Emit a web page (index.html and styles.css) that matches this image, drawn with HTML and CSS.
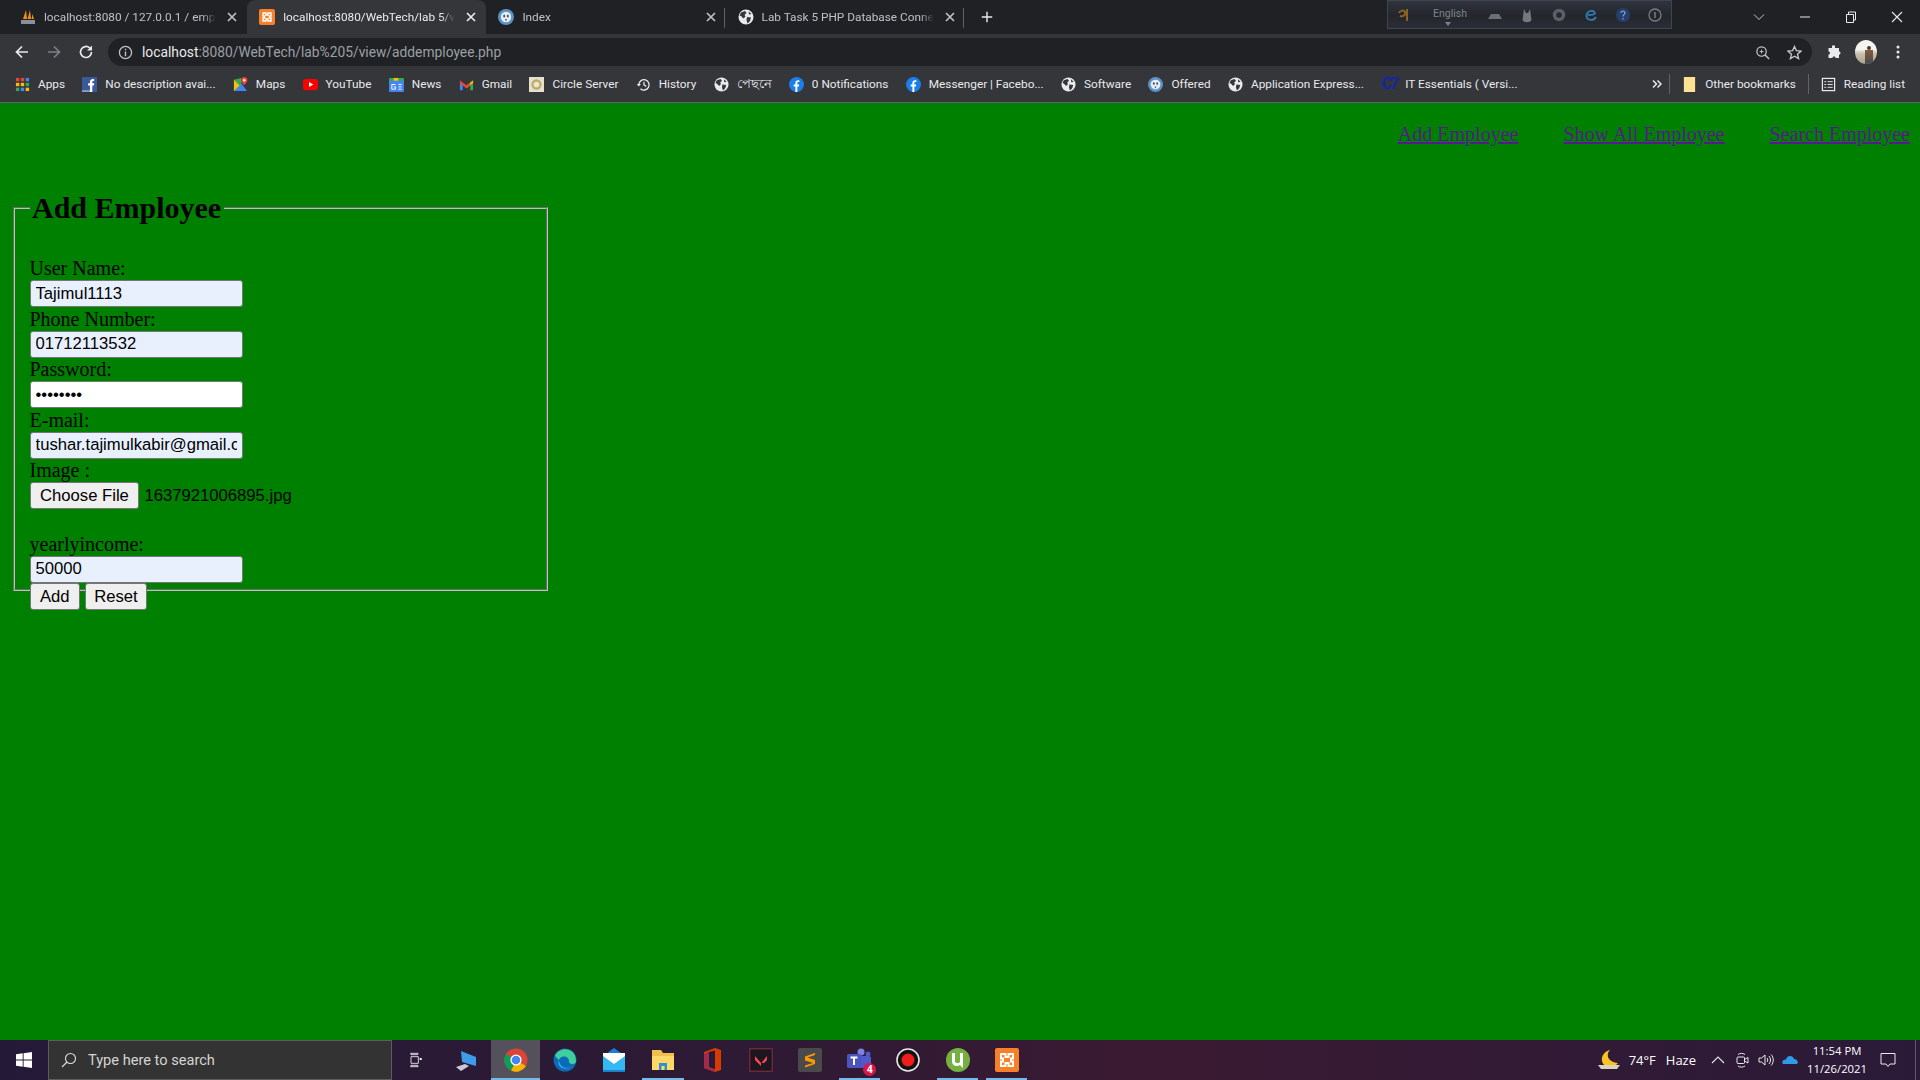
FILE: index.html
```html
<!DOCTYPE html>
<html lang="en">
<head>
    <meta charset="UTF-8">
    <title>Add Employee</title>
    <link rel="stylesheet" href="styles.css">
</head>
<body>
    <svg class="icon-defs" width="0" height="0">
        <symbol id="globe" viewBox="0 0 16 16">
            <circle cx="8" cy="8" r="7.5" fill="#e8eaed"/>
            <path d="M3 3.5 L7 2 L8.5 4 L6.5 6 L7.5 7.5 L5.5 9.5 L3 7 L1.5 6.5 Z M9 8 L13 8.5 L12 12 L9.5 14.5 L8.5 11 Z M10.5 2.5 L13.5 5 L11 5.5 Z" fill="#35363a"/>
        </symbol>
        <symbol id="fbround" viewBox="0 0 16 16">
            <circle cx="8" cy="8" r="8" fill="#1a7fe8"/>
            <path d="M6.8 16 V10 H5 V8 H6.8 V6.3 C6.8 4.4 8 3.4 9.6 3.4 L11 3.5 V5.3 H10 C9.2 5.3 8.9 5.7 8.9 6.4 V8 H10.9 L10.6 10 H8.9 V16 Z" fill="#fff"/>
        </symbol>
        <symbol id="shield" viewBox="0 0 16 16">
            <circle cx="8" cy="8" r="8" fill="#5b93c4"/>
            <circle cx="8" cy="8" r="5.2" fill="#e8eef4"/>
            <ellipse cx="6.2" cy="7" rx="1" ry="1.5" fill="#33577a"/>
            <ellipse cx="9.8" cy="7" rx="1" ry="1.5" fill="#33577a"/>
            <path d="M7 10 H9 L8 12.5 Z" fill="#33577a"/>
        </symbol>
        <symbol id="xampp" viewBox="0 0 16 16">
            <rect width="16" height="16" rx="2" fill="#f6812a"/>
            <path d="M4 4 H7 V6 H9 V4 H12 V7 H10.5 V9 H12 V12 H9 V10 H7 V12 H4 V9 H5.5 V7 H4 Z" fill="none" stroke="#fff" stroke-width="1.4"/>
        </symbol>
        <symbol id="close" viewBox="0 0 16 16">
            <path d="M4 4 L12 12 M12 4 L4 12" stroke="currentColor" stroke-width="1.7" fill="none"/>
        </symbol>
    </svg>

    <header class="browser">
        <div class="tabstrip">
            <div class="tab">
                <svg class="favicon" viewBox="0 0 16 16">
                    <path d="M3 10 L6 1 L7 10 Z M7.5 10 L10 1 L11 10 Z M11.5 10 L12.5 5 L14 10 Z" fill="#f29111"/>
                    <rect x="1" y="11" width="14" height="4" fill="#8a8f99"/>
                </svg>
                <span class="tab-title">localhost:8080 / 127.0.0.1 / emplo</span>
                <svg class="tab-close"><use href="#close"/></svg>
            </div>
            <div class="tab tab-active">
                <svg class="favicon"><use href="#xampp"/></svg>
                <span class="tab-title">localhost:8080/WebTech/lab 5/vie</span>
                <svg class="tab-close"><use href="#close"/></svg>
            </div>
            <div class="tab tab-sep">
                <svg class="favicon"><use href="#shield"/></svg>
                <span class="tab-title">Index</span>
                <svg class="tab-close"><use href="#close"/></svg>
            </div>
            <div class="tab tab-sep">
                <svg class="favicon"><use href="#globe"/></svg>
                <span class="tab-title">Lab Task 5 PHP Database Connec</span>
                <svg class="tab-close"><use href="#close"/></svg>
            </div>
            <svg class="new-tab" viewBox="0 0 16 16"><path d="M8 2 V14 M2 8 H14" stroke="#e8eaed" stroke-width="1.6"/></svg>

            <div class="avro-bar">
                <svg class="avro-icon" viewBox="0 0 16 16"><path d="M2 6 C3 3 7 3 8 5 C9 8 6 10 3 9 M10 2 V14" stroke="#8a6420" stroke-width="2" fill="none"/></svg>
                <div class="avro-lang">English<span class="avro-caret"></span></div>
                <svg class="avro-icon" viewBox="0 0 16 16"><path d="M1 12 L4 7 H12 L15 12 Z" fill="#6b7076"/></svg>
                <svg class="avro-icon" viewBox="0 0 16 16"><path d="M5 2 L7 6 H9 L11 2 L12.5 13 C11 16 5 16 3.5 13 Z" fill="#75787c"/></svg>
                <svg class="avro-icon" viewBox="0 0 16 16"><circle cx="8" cy="8" r="4.5" fill="none" stroke="#5b6068" stroke-width="3.5"/></svg>
                <svg class="avro-icon" viewBox="0 0 16 16"><path d="M13 10 C11 14 4 14 3.5 9 C3.5 4 10 2 12 6 C12 8 8 8 5 8" fill="none" stroke="#2f78a8" stroke-width="2"/></svg>
                <svg class="avro-icon" viewBox="0 0 16 16"><circle cx="8" cy="8" r="7" fill="#26406e"/><path d="M6 6 C6 3.5 10 3.5 10 6 C10 7.5 8 7.5 8 9.5 M8 11 V12.5" stroke="#7c97c4" stroke-width="1.4" fill="none"/></svg>
                <svg class="avro-icon" viewBox="0 0 16 16"><circle cx="8" cy="8" r="6" fill="none" stroke="#7a7d82" stroke-width="1.3"/><path d="M8 5 V11" stroke="#7a7d82" stroke-width="1.5"/></svg>
            </div>

            <div class="window-controls">
                <svg class="win-btn" viewBox="0 0 16 16"><path d="M3 5.5 L8 10.5 L13 5.5" stroke="#c8c9cb" fill="none"/></svg>
                <svg class="win-btn" viewBox="0 0 16 16"><path d="M3 8 H13" stroke="#e8eaed"/></svg>
                <svg class="win-btn" viewBox="0 0 16 16"><path d="M3.5 5.5 H10.5 V13.5 H3.5 Z M5.5 5.5 V3 H12.5 V11 H10.5" stroke="#e8eaed" fill="none"/></svg>
                <svg class="win-btn" viewBox="0 0 16 16"><path d="M3 3 L13 13 M13 3 L3 13" stroke="#e8eaed" stroke-width="1.1"/></svg>
            </div>
        </div>

        <div class="toolbar">
            <svg class="tool-btn" viewBox="0 0 16 16"><path d="M14 8 H3 M8 2.5 L2.5 8 L8 13.5" stroke="#e8eaed" stroke-width="1.7" fill="none"/></svg>
            <svg class="tool-btn" viewBox="0 0 16 16"><path d="M2 8 H13 M8 2.5 L13.5 8 L8 13.5" stroke="#7c7f84" stroke-width="1.7" fill="none"/></svg>
            <svg class="tool-btn" viewBox="0 0 16 16"><path d="M13.5 8 A5.5 5.5 0 1 1 11.8 4" stroke="#e8eaed" stroke-width="1.7" fill="none"/><path d="M14 1.5 V6.5 H9 Z" fill="#e8eaed"/></svg>
            <div class="omnibox">
                <svg class="omni-info" viewBox="0 0 16 16"><circle cx="8" cy="8" r="6.5" fill="none" stroke="#bdc1c6" stroke-width="1.4"/><path d="M8 7 V12 M8 4 V5.6" stroke="#bdc1c6" stroke-width="1.5"/></svg>
                <span class="omni-url"><span class="omni-host">localhost</span>:8080/WebTech/lab%205/view/addemployee.php</span>
                <svg class="omni-icon" viewBox="0 0 16 16"><circle cx="7" cy="7" r="5" fill="none" stroke="#c4c7ca" stroke-width="1.3"/><path d="M10.5 10.5 L15 15" stroke="#c4c7ca" stroke-width="1.6"/><path d="M5 7 H9 M7 5 V9" stroke="#c4c7ca"/></svg>
                <svg class="omni-icon" viewBox="0 0 16 16"><path d="M8 1.5 L10 6 L15 6.5 L11.2 9.8 L12.4 14.6 L8 12 L3.6 14.6 L4.8 9.8 L1 6.5 L6 6 Z" fill="none" stroke="#c4c7ca" stroke-width="1.4"/></svg>
            </div>
            <svg class="tool-btn" viewBox="0 0 16 16"><path d="M6 2.5 C6 .8 9 .8 9 2.5 V4 H13 V7.5 C15 7 15 11 13 10.5 V14 H9.5 C10 12 6 12 6.5 14 H2.5 V10.5 C4.5 11 4.5 7 2.5 7.5 V4 H6 Z" fill="#e8eaed"/></svg>
            <div class="tool-slot"><div class="avatar"><span class="avatar-head"></span><span class="avatar-body"></span></div></div>
            <svg class="tool-btn" viewBox="0 0 16 16"><circle cx="8" cy="3" r="1.5" fill="#e8eaed"/><circle cx="8" cy="8" r="1.5" fill="#e8eaed"/><circle cx="8" cy="13" r="1.5" fill="#e8eaed"/></svg>
        </div>

        <nav class="bookmarks">
            <a class="bm">
                <svg class="bm-icon" viewBox="0 0 16 16">
                    <g fill="#ea4335"><rect x="1" y="1" width="3.6" height="3.6"/><rect x="6.2" y="1" width="3.6" height="3.6"/></g><rect x="11.4" y="1" width="3.6" height="3.6" fill="#4285f4"/>
                    <g fill="#fbbc04"><rect x="1" y="6.2" width="3.6" height="3.6"/><rect x="6.2" y="6.2" width="3.6" height="3.6"/></g><rect x="11.4" y="6.2" width="3.6" height="3.6" fill="#34a853"/>
                    <rect x="1" y="11.4" width="3.6" height="3.6" fill="#34a853"/><rect x="6.2" y="11.4" width="3.6" height="3.6" fill="#4285f4"/><rect x="11.4" y="11.4" width="3.6" height="3.6" fill="#fbbc04"/>
                </svg>Apps</a>
            <a class="bm">
                <svg class="bm-icon" viewBox="0 0 16 16"><rect width="16" height="16" fill="#3b5998"/><path d="M8.5 16 V9 H6.5 V6.6 H8.5 V5 C8.5 3 9.8 2 11.4 2 H13 V4.3 H12 C11.2 4.3 11 4.7 11 5.4 V6.6 H13 L12.7 9 H11 V16 Z" fill="#fff"/><rect y="14" width="8.5" height="2" fill="#8b9dc3"/></svg>No description avai...</a>
            <a class="bm">
                <svg class="bm-icon" viewBox="0 0 16 16"><path d="M1 3 L9 1 V15 L1 15 Z" fill="#34a853"/><path d="M1 15 L9 7 L15 15 Z" fill="#4285f4"/><path d="M1 3 L7 9 L1 15 Z" fill="#fbbc04"/><path d="M12 0 C9 0 8 3 9 5 L12 9 L15 5 C16 3 15 0 12 0 Z" fill="#ea4335"/><circle cx="12" cy="3.5" r="1.3" fill="#fff"/></svg>Maps</a>
            <a class="bm">
                <svg class="bm-icon" viewBox="0 0 16 16"><rect y="2" width="16" height="12" rx="3" fill="#f00"/><path d="M6.4 5.4 L11 8 L6.4 10.6 Z" fill="#fff"/></svg>YouTube</a>
            <a class="bm">
                <svg class="bm-icon" viewBox="0 0 16 16"><rect y="1" width="16" height="5" rx="1" fill="#34a853"/><rect x="5" y="1" width="5" height="5" fill="#fbbc04"/><rect y="4" width="16" height="12" rx="1" fill="#4285f4"/><path d="M7 8 H3 V13 H7 V10.5 H5 M10 8 H13.5 M10 10.5 H13.5 M10 13 H13.5" stroke="#fff" fill="none"/></svg>News</a>
            <a class="bm">
                <svg class="bm-icon" viewBox="0 0 16 16"><path d="M1 4 L1 14 H4 V7 Z" fill="#4285f4"/><path d="M15 4 V14 H12 V7 Z" fill="#34a853"/><path d="M1 3.5 L8 9 L8 12 L1 6.5 Z" fill="#ea4335"/><path d="M15 3.5 L8 9 L8 12 L15 6.5 Z" fill="#fbbc04"/><path d="M4 6 L8 9 L12 6 V9 L8 12 L4 9 Z" fill="#ea4335"/></svg>Gmail</a>
            <a class="bm">
                <svg class="bm-icon" viewBox="0 0 16 16"><rect width="16" height="16" fill="#e6e1cf"/><circle cx="8" cy="8" r="5.5" fill="#c2ab63"/><circle cx="8" cy="8" r="3" fill="#e9e7dc"/></svg>Circle Server</a>
            <a class="bm">
                <svg class="bm-icon" viewBox="0 0 16 16"><path d="M3 8 A5.5 5.5 0 1 1 4.8 12.5" stroke="#e8eaed" stroke-width="1.4" fill="none"/><path d="M.8 7.5 H5.2 L3 10 Z" fill="#e8eaed"/><path d="M8.5 5 V8.5 L11 10" stroke="#e8eaed" stroke-width="1.3" fill="none"/></svg>History</a>
            <a class="bm"><svg class="bm-icon"><use href="#globe"/></svg><span class="bm-bn" lang="bn">পেছনে</span></a>
            <a class="bm"><svg class="bm-icon"><use href="#fbround"/></svg>0 Notifications</a>
            <a class="bm"><svg class="bm-icon"><use href="#fbround"/></svg>Messenger | Facebo...</a>
            <a class="bm"><svg class="bm-icon"><use href="#globe"/></svg>Software</a>
            <a class="bm"><svg class="bm-icon"><use href="#shield"/></svg>Offered</a>
            <a class="bm"><svg class="bm-icon"><use href="#globe"/></svg>Application Express...</a>
            <a class="bm"><span class="bm-c7">C7</span>IT Essentials ( Versi...</a>
            <div class="bm-right">
                <svg class="bm-more" viewBox="0 0 10 10"><path d="M1 1.5 L4.5 5 L1 8.5 M5.5 1.5 L9 5 L5.5 8.5" stroke="#e8eaed" stroke-width="1.5" fill="none"/></svg>
                <span class="bm-sep"></span>
                <a class="bm"><svg class="bm-icon" viewBox="0 0 16 16"><path d="M2 0 H14 V16 H2 Z" fill="#fde293"/></svg>Other bookmarks</a>
                <span class="bm-sep"></span>
                <a class="bm"><svg class="bm-icon" viewBox="0 0 16 16"><rect x="1.5" y="1.5" width="13" height="13" fill="none" stroke="#e8eaed" stroke-width="1.3"/><path d="M3.5 5 H5.5 M7 5 H12.5 M3.5 8 H5.5 M7 8 H12.5 M3.5 11 H5.5 M7 11 H12.5" stroke="#e8eaed"/></svg>Reading list</a>
            </div>
        </nav>
    </header>

    <main class="page">
        <ul class="menu">
            <li><a href="#add">Add Employee</a></li>
            <li><a href="#all">Show All Employee</a></li>
            <li><a href="#search">Search Employee</a></li>
        </ul>

        <form class="emp-form">
            <fieldset>
                <legend>Add Employee</legend>
                <br>
                User Name:<br>
                <input class="field autofilled" type="text" value="Tajimul1113"><br>
                Phone Number:<br>
                <input class="field autofilled" type="text" value="01712113532"><br>
                Password:<br>
                <input class="field" type="password" value="12345678"><br>
                E-mail:<br>
                <input class="field autofilled" type="text" value="tushar.tajimulkabir@gmail.com"><br>
                Image :<br>
                <button class="btn" type="button">Choose File</button><span class="file-name">1637921006895.jpg</span><br>
                <br>
                yearlyincome:<br>
                <input class="field autofilled" type="text" value="50000"><br>
                <button class="btn" type="button">Add</button>
                <button class="btn btn-reset" type="reset">Reset</button>
            </fieldset>
        </form>
    </main>

    <footer class="taskbar">
        <div class="start">
            <svg class="start-logo" viewBox="0 0 16 16"><path d="M0 2.3 L6.7 1.3 V7.5 H0 Z M7.6 1.2 L16 0 V7.5 H7.6 Z M0 8.4 H6.7 V14.7 L0 13.7 Z M7.6 8.4 H16 V16 L7.6 14.8 Z" fill="#fff"/></svg>
        </div>
        <div class="search-box">
            <svg class="search-glass" viewBox="0 0 16 16"><circle cx="9.5" cy="6.5" r="5" fill="none" stroke="#e0e0e0" stroke-width="1.1"/><path d="M6 10 L1 15" stroke="#e0e0e0" stroke-width="1.1"/></svg>
            <span>Type here to search</span>
        </div>
        <div class="task-apps">
            <div class="app app-view">
                <svg class="app-icon" viewBox="0 0 24 24"><path d="M5 2 H17 M5 22 H17 M6 7 H17 V17 H6 Z M6 2 V4 H16 V2 M6 22 V20 H16 V22" stroke="#fff" stroke-width="1.2" fill="none"/><rect x="19" y="9" width="3" height="3" fill="#fff"/></svg>
            </div>
            <div class="app">
                <svg class="app-icon" viewBox="0 0 24 24"><path d="M6 3 L21 9 V18 L7 14 Z" fill="#3d9be9"/><path d="M1 19 L10 16 L14 18 L6 23 Z" fill="#c8ccd2"/></svg>
            </div>
            <div class="app app-current">
                <svg class="app-icon" viewBox="0 0 24 24"><circle cx="12" cy="12" r="11.5" fill="#db4437"/><path d="M12 12 L22 18 A11.5 11.5 0 0 1 7 22.5 Z" fill="#f4b400"/><path d="M12 12 L7 22.5 A11.5 11.5 0 0 1 2 6 Z" fill="#0f9d58"/><circle cx="12" cy="12" r="5.6" fill="#fff"/><circle cx="12" cy="12" r="4.3" fill="#4285f4"/></svg>
            </div>
            <div class="app">
                <svg class="app-icon" viewBox="0 0 24 24"><circle cx="12" cy="12" r="11.5" fill="#0c6ab8"/><path d="M2 8 C6 -2 23 -1 23 13 C23 17 17 17 16 14 C17 8 8 6 6 12 C4 10 3 9 2 8 Z" fill="#3ecf9a"/><path d="M6 12 C6 18 12 22 18 19 C12 23 3 19 6 12 Z" fill="#34b4e8"/></svg>
            </div>
            <div class="app">
                <svg class="app-icon" viewBox="0 0 24 24"><path d="M1 8 L12 0 L23 8 V24 H1 Z" fill="#1a7fcf"/><path d="M1 8 H23 V22 H1 Z" fill="#35b8f2"/><path d="M1 8 L12 16 L23 8 V5 H1 Z" fill="#fff"/></svg>
            </div>
            <div class="app app-running">
                <svg class="app-icon" viewBox="0 0 24 24"><path d="M1 2 H10 L12 5 H23 V22 H1 Z" fill="#f0c04c"/><rect x="1" y="8" width="22" height="14" fill="#ffd868"/><path d="M8 22 V15 H16 V22 H13.5 V18 H10.5 V22 Z" fill="#2e8ed6"/></svg>
            </div>
            <div class="app">
                <svg class="app-icon" viewBox="0 0 24 24"><path d="M4 4 L15 0 L21 2 V22 L15 24 L4 20 Z" fill="#d83b01"/><path d="M4 20 V6 L9 4 V19 L15 21 V24 Z" fill="#a32a4a"/><path d="M9 4 L15 2.5 V21 L9 19 Z" fill="#2b1a35"/></svg>
            </div>
            <div class="app">
                <svg class="app-icon" viewBox="0 0 24 24"><rect x=".7" y=".7" width="22.6" height="22.6" fill="#1d1620" stroke="#6b2836" stroke-width="1.4"/><path d="M6 8 L12 15 V18 L6 12 Z M18 8 V12 L15 15 H12.5 Z" fill="#ff4655"/></svg>
            </div>
            <div class="app">
                <svg class="app-icon" viewBox="0 0 24 24"><rect width="24" height="24" rx="2" fill="#4a4a4a"/><path d="M17 5 L7 8.5 V12.5 L15 15 L7 17.5 V19.5 L17 16 V12 L9.5 9.5 L17 7 Z" fill="#ff9800"/></svg>
            </div>
            <div class="app app-running">
                <div class="teams">
                    <svg class="app-icon" viewBox="0 0 24 24"><circle cx="14" cy="4" r="3.5" fill="#7b83eb"/><circle cx="21" cy="6" r="2.5" fill="#5059c9"/><rect x="9" y="8" width="15" height="12" rx="2" fill="#5059c9"/><rect x="0" y="6" width="14" height="14" rx="1.5" fill="#4b53bc"/><path d="M3.5 9.5 H10.5 M7 9.5 V17" stroke="#fff" stroke-width="2"/></svg>
                    <span class="teams-badge">4</span>
                </div>
            </div>
            <div class="app">
                <svg class="app-icon" viewBox="0 0 24 24"><circle cx="12" cy="12" r="11" fill="#111" stroke="#e8e8e8" stroke-width="1.6"/><circle cx="12" cy="12" r="6.5" fill="#f01d1d"/></svg>
            </div>
            <div class="app app-running">
                <svg class="app-icon" viewBox="0 0 24 24"><circle cx="12" cy="12" r="12" fill="#76b041"/><path d="M6 5 H9 V13 C9 16 14 16 14 13 V5 H17 V20 L14 17 C11 19 6 18 6 13 Z" fill="#fff"/></svg>
            </div>
            <div class="app app-running">
                <svg class="app-icon" viewBox="0 0 24 24"><rect width="24" height="24" rx="2" fill="#f6812a"/><path d="M6 6 H10.5 V9 H13.5 V6 H18 V10.5 H16 V13.5 H18 V18 H13.5 V15 H10.5 V18 H6 V13.5 H8 V10.5 H6 Z" fill="none" stroke="#fff" stroke-width="2"/></svg>
            </div>
        </div>
        <div class="tray">
            <svg class="tray-moon" viewBox="0 0 22 22"><path d="M12 1 C8 5 9 13 20 14 C17 19 5 19 4 12 C3 7 7 2 12 1 Z" fill="#f7c325"/><path d="M0 16 H22 L19 20 H3 Z" fill="#d9d4c0"/></svg>
            <span class="tray-temp">74°F</span>
            <span class="tray-haze">Haze</span>
            <svg class="tray-icon tray-first" viewBox="0 0 16 16"><path d="M2 11 L8 5 L14 11" stroke="#e8e8e8" stroke-width="1.1" fill="none"/></svg>
            <svg class="tray-icon" viewBox="0 0 16 16"><rect x="3" y="5" width="7.5" height="6.5" rx="1" fill="none" stroke="#e8e8e8"/><path d="M10.5 7.5 L14 5.5 V11 L10.5 9 M4 2.5 C6 1 9 1 11 2.5 M4 14 C6 15.5 9 15.5 11 14" stroke="#e8e8e8" fill="none"/></svg>
            <svg class="tray-icon" viewBox="0 0 16 16"><path d="M1 6 H3.5 L7 3 V13 L3.5 10 H1 Z M9 6 C10 7 10 9 9 10 M11 4 C13 6 13 10 11 12 M13 2.5 C16 5 16 11 13 13.5" stroke="#e8e8e8" fill="none"/></svg>
            <svg class="tray-icon" viewBox="0 0 16 16"><path d="M1 12 C-1 9 2 7 4 7.5 C5 3 11 3 12 7 C15 7 17 10 15 12 Z" fill="#2f9be8"/></svg>
            <div class="tray-clock">
                <span>11:54 PM</span>
                <span>11/26/2021</span>
            </div>
            <svg class="tray-note" viewBox="0 0 16 16"><path d="M1 1.5 H15 V12 H10 L8 14.5 L6 12 H1 Z" fill="none" stroke="#fff" stroke-width=".9"/></svg>
            <span class="show-desktop"></span>
        </div>
    </footer>
</body>
</html>
```

FILE: styles.css
```css
html, body {
    margin: 0;
    height: 100%;
}
body {
    width: 1920px;
    height: 1080px;
    display: flex;
    flex-direction: column;
    overflow: hidden;
    font-family: "Liberation Serif", serif;
    background-color: #008000;
}
.icon-defs {
    position: absolute;
}

/* browser window */
.browser {
    font-family: Roboto, "Noto Sans", sans-serif;
    font-size: 11.8px;
    color: #e8eaed;
    background-color: #35363a;
}
.tabstrip {
    position: relative;
    height: 34px;
    display: flex;
    align-items: center;
    padding-left: 8px;
    background-color: #202124;
}
.tab {
    position: relative;
    box-sizing: border-box;
    width: 239.2px;
    height: 34px;
    display: flex;
    align-items: center;
    gap: 8px;
    padding: 0 7px 0 12px;
    color: #bdc1c6;
}
.tab-active {
    background-color: #35363a;
    border-radius: 8px 8px 0 0;
    color: #e8eaed;
}
.tab-sep::after {
    content: "";
    position: absolute;
    right: 1px;
    top: 8px;
    height: 20px;
    width: 1px;
    background-color: #5f6368;
}
.favicon {
    width: 16px;
    height: 16px;
    flex: none;
}
.tab-title {
    flex: 1;
    overflow: hidden;
    white-space: nowrap;
    -webkit-mask-image: linear-gradient(to left, transparent, #000 14px);
}
.tab-close {
    width: 16px;
    height: 16px;
    flex: none;
}
.new-tab {
    width: 14px;
    height: 14px;
    margin-left: 15px;
}
.avro-bar {
    position: absolute;
    left: 1387px;
    top: 0;
    width: 285px;
    height: 29px;
    box-sizing: border-box;
    display: flex;
    align-items: center;
    gap: 16px;
    padding: 0 9px;
    border: 1px solid #3d4452;
    background: linear-gradient(#2f333c, #24262c 55%, #2b2e36);
}
.avro-icon {
    width: 16px;
    height: 16px;
    flex: none;
}
.avro-lang {
    position: relative;
    top: -1px;
    width: 32px;
    margin: 0 6px 0 4px;
    font-size: 10.5px;
    color: #7e838a;
    text-align: center;
}
.avro-caret {
    position: absolute;
    left: 12px;
    top: 15px;
    border: 3px solid transparent;
    border-top: 4px solid #7e838a;
}
.window-controls {
    margin-left: auto;
    display: flex;
    align-items: center;
    padding-right: 15px;
    gap: 30px;
}
.win-btn {
    width: 16px;
    height: 16px;
}

.toolbar {
    height: 32px;
    display: flex;
    align-items: flex-end;
    padding: 0 6px;
}
.tool-btn {
    box-sizing: border-box;
    width: 32px;
    height: 28px;
    padding: 6px 8px;
    flex: none;
}
.tool-slot {
    width: 32px;
    height: 28px;
    display: flex;
    align-items: center;
    justify-content: center;
}
.avatar {
    position: relative;
    width: 22px;
    height: 24px;
    border-radius: 50%;
    overflow: hidden;
    background: linear-gradient(#f4f5f0 40%, #c9c4b0 55%, #a99f85);
}
.avatar-head {
    position: absolute;
    left: 12px;
    top: 6px;
    width: 4px;
    height: 4px;
    border-radius: 50%;
    background-color: #4a3a30;
}
.avatar-body {
    position: absolute;
    left: 10px;
    top: 10px;
    width: 8px;
    height: 14px;
    background: linear-gradient(#8a5a35, #3e4a58);
}
.omnibox {
    flex: 1;
    height: 28px;
    margin: 0 6px;
    padding: 0 10px 0 10px;
    display: flex;
    align-items: center;
    border-radius: 14px;
    background-color: #202124;
    font-size: 13.8px;
    color: #9aa0a6;
}
.omni-info {
    width: 15px;
    height: 15px;
    margin-right: 9px;
}
.omni-host {
    color: #e8eaed;
}
.omni-url {
    flex: 1;
}
.omni-icon {
    width: 15px;
    height: 15px;
    margin-left: 17px;
}

.bookmarks {
    position: relative;
    height: 37px;
    box-sizing: border-box;
    display: flex;
    align-items: center;
    gap: 17.3px;
    padding: 0 15px;
    border-bottom: 1px solid #5f6368;
}
.bm {
    display: flex;
    align-items: center;
    gap: 8px;
    white-space: nowrap;
}
.bm-icon {
    width: 15px;
    height: 15px;
    flex: none;
}
.bm-bn {
    font-family: "Noto Sans", "DejaVu Sans", sans-serif;
    font-size: 13px;
}
.bm-c7 {
    width: 16px;
    font: bold 18px "Liberation Mono", monospace;
    letter-spacing: -3px;
    color: #13289c;
}
.bm-right {
    margin-left: auto;
    display: flex;
    align-items: center;
    gap: 12px;
}
.bm-more {
    width: 10px;
    height: 10px;
    margin-right: -5px;
}
.bm-sep {
    width: 1px;
    height: 20px;
    background-color: #5f6368;
}

/* the php page itself */
.page {
    flex: 1;
    padding: 0 10px;
    min-height: 0;
    font-size: 20px;
    color: #000;
}
.menu {
    margin: 20px 0 0;
    padding: 0;
    height: 68px;
    list-style: none;
    display: flex;
    justify-content: flex-end;
    gap: 45px;
}
.menu a {
    color: #551a8b;
}
fieldset {
    box-sizing: border-box;
    width: 535px;
    height: 400px;
    margin: 0 2.5px;
    padding: 9px 15px 0;
    border: 2px groove #c0c0c0;
}
legend {
    padding: 0 2.5px;
    font-size: 30px;
    font-weight: bold;
}
.field {
    box-sizing: border-box;
    width: 213px;
    height: 27px;
    margin-bottom: 0.5px;
    padding: 1px 5px;
    border: 1px solid #767676;
    border-radius: 3px;
    background-color: #fff;
    font: 16.67px "Liberation Sans", sans-serif;
    color: #000;
}
.autofilled {
    background-color: #e8f0fe;
}
.btn {
    box-sizing: border-box;
    height: 27px;
    margin-bottom: 0.5px;
    padding: 1px 9.5px;
    border: 1px solid #767676;
    border-radius: 3px;
    background-color: #efefef;
    font: 16.67px "Liberation Sans", sans-serif;
    color: #000;
}
.btn-reset {
    padding: 1px 8px;
}
.file-name {
    margin-left: 5px;
    font: 16.67px "Liberation Sans", sans-serif;
}

/* windows taskbar */
.taskbar {
    height: 40px;
    flex: none;
    display: flex;
    align-items: stretch;
    font-family: "Open Sans", Roboto, sans-serif;
    font-size: 11.3px;
    color: #fff;
    background: linear-gradient(to right, #241a38, #2e1a34 40%, #3a1a32 60%, #2a1a38);
}
.start {
    width: 48px;
    display: flex;
    align-items: center;
    justify-content: center;
}
.start-logo {
    width: 16px;
    height: 16px;
}
.search-box {
    box-sizing: border-box;
    width: 344px;
    display: flex;
    align-items: center;
    gap: 11px;
    padding-left: 12px;
    border: 1px solid #5c5c5c;
    background-color: #333;
    font-family: Roboto, sans-serif;
    font-size: 14.6px;
    color: #d4d4d4;
}
.search-glass {
    width: 16px;
    height: 16px;
}
.task-apps {
    display: flex;
    padding-left: 1px;
}
.app {
    position: relative;
    box-sizing: border-box;
    width: 49.1px;
    display: flex;
    align-items: center;
    justify-content: center;
}
.app-icon {
    width: 24px;
    height: 24px;
}
.app-view .app-icon {
    width: 16px;
    height: 16px;
    margin-right: 5px;
}
.app-current {
    background-color: #54505c;
}
.app-current::after,
.app-running::after {
    content: "";
    position: absolute;
    bottom: 0;
    height: 2px;
    left: 4px;
    right: 4px;
    background-color: #76b9ed;
}
.app-current::after {
    left: 0;
    right: 0;
}
.teams {
    position: relative;
    height: 24px;
}
.teams-badge {
    position: absolute;
    right: -5px;
    bottom: -4px;
    width: 13px;
    height: 13px;
    border-radius: 50%;
    background-color: #d6174a;
    font-size: 10px;
    font-weight: bold;
    line-height: 13px;
    text-align: center;
}
.tray {
    margin-left: auto;
    display: flex;
    align-items: center;
}
.tray-moon {
    width: 22px;
    height: 22px;
    margin-right: 9px;
}
.tray-temp {
    font-size: 13px;
    margin-right: 10px;
}
.tray-haze {
    font-size: 13px;
}
.tray-icon {
    width: 16px;
    height: 16px;
    margin-left: 8px;
}
.tray-first {
    margin-left: 14px;
}
.tray-clock {
    width: 70px;
    margin-left: 4px;
    display: flex;
    flex-direction: column;
    align-items: center;
    line-height: 18px;
}
.tray-note {
    width: 16px;
    height: 16px;
    margin: 0 19px 0 8px;
}
.show-desktop {
    width: 1px;
    height: 40px;
    margin-right: 4px;
    background-color: #5f5a66;
}
```
